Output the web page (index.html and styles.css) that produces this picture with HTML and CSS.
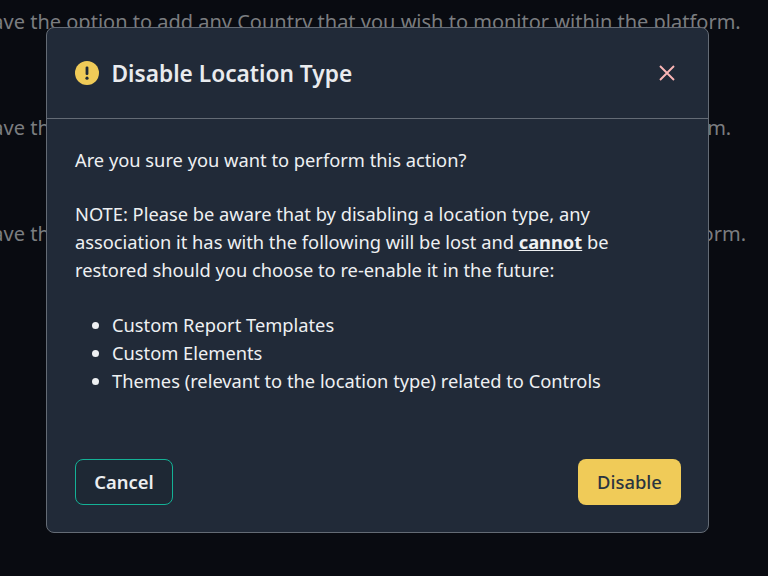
FILE: index.html
```html
<!DOCTYPE html>
<html lang="en">
<head>
<meta charset="utf-8">
<title>Disable Location Type</title>
<link rel="stylesheet" href="styles.css">
</head>
<body>
<main class="page">
  <p class="line">You have the option to add any Country that you wish to monitor within the platform.</p>
  <p class="line">You have the option to add any Region that you wish to monitor within the platform.</p>
  <p class="line">You have the option to add any Territory that you wish to monitor within the platform.</p>
</main>
<div class="modal" role="dialog">
  <header class="modal-head">
    <svg class="warn" viewBox="0 0 24 24" width="24" height="24"><circle cx="12" cy="12" r="12" fill="#f0cb58"/><rect x="10.6" y="5.5" width="2.8" height="8.5" rx="1.2" fill="#1f2937"/><circle cx="12" cy="17.2" r="1.6" fill="#1f2937"/></svg>
    <h2 class="title">Disable Location Type</h2>
    <svg class="close" viewBox="0 0 16 16" width="16" height="16"><path d="M1 1 15 15M15 1 1 15" stroke="#fbb6b6" stroke-width="1.9" fill="none"/></svg>
  </header>
  <section class="modal-body">
    <p class="para">Are you sure you want to perform this action?</p>
    <p class="para">NOTE: Please be aware that by disabling a location type, any association it has with the following will be lost and <strong class="strong">cannot</strong> be restored should you choose to re-enable it in the future:</p>
    <ul class="list">
      <li>Custom Report Templates</li>
      <li>Custom Elements</li>
      <li>Themes (relevant to the location type) related to Controls</li>
    </ul>
  </section>
  <footer class="modal-foot">
    <button class="btn btn-cancel">Cancel</button>
    <button class="btn btn-disable">Disable</button>
  </footer>
</div>
</body>
</html>
```
FILE: styles.css
```css
* { box-sizing: border-box; }
html, body { margin: 0; height: 100%; }
body {
  background: #090b11;
  font-family: "Noto Sans", sans-serif;
  overflow: hidden;
  width: 768px;
  height: 576px;
  position: relative;
}
.page { padding-top: 9px; margin-left: -60px; width: 828px; overflow: hidden; }
.line {
  margin: 0 0 80px;
  font-size: 20px;
  line-height: 26px;
  color: #7b7d80;
  white-space: nowrap;
}
.modal {
  position: absolute;
  left: 46px;
  top: 27px;
  width: 663px;
  height: 506px;
  background: #212a38;
  border: 1px solid #646b75;
  border-radius: 8px;
  display: flex;
  flex-direction: column;
}
.modal-head {
  height: 91px;
  flex: none;
  display: flex;
  align-items: center;
  padding: 0 33px 0 28px;
  border-bottom: 1px solid #646b75;
}
.warn { flex: none; }
.title {
  margin: 2px 0 0 12.5px;
  flex: 1;
  font-size: 22.7px;
  font-weight: 600;
  line-height: 30px;
  color: #e9ebee;
}
.close { flex: none; }
.modal-body {
  flex: 1;
  padding: 27px 28px 0;
  color: #eef0f2;
  font-size: 18.3px;
  line-height: 28px;
}
.para { margin: 0 0 26px; }
.strong { font-weight: 700; text-decoration: underline; }
.list { margin: 0; padding: 1px 0 0 37px; }
.modal-foot {
  flex: none;
  display: flex;
  justify-content: space-between;
  padding: 0 27px 27px 28px;
}
.btn {
  height: 46px;
  border-radius: 8px;
  font-family: inherit;
  font-size: 18.4px;
  line-height: 24px;
  padding: 0;
}
.btn-cancel {
  width: 98px;
  background: #1e2834;
  border: 1px solid #14b196;
  color: #eceef0;
  font-weight: 600;
}
.btn-disable {
  width: 103px;
  background: #f0cb58;
  border: 0;
  color: #2a3440;
  font-weight: 500;
}
```
